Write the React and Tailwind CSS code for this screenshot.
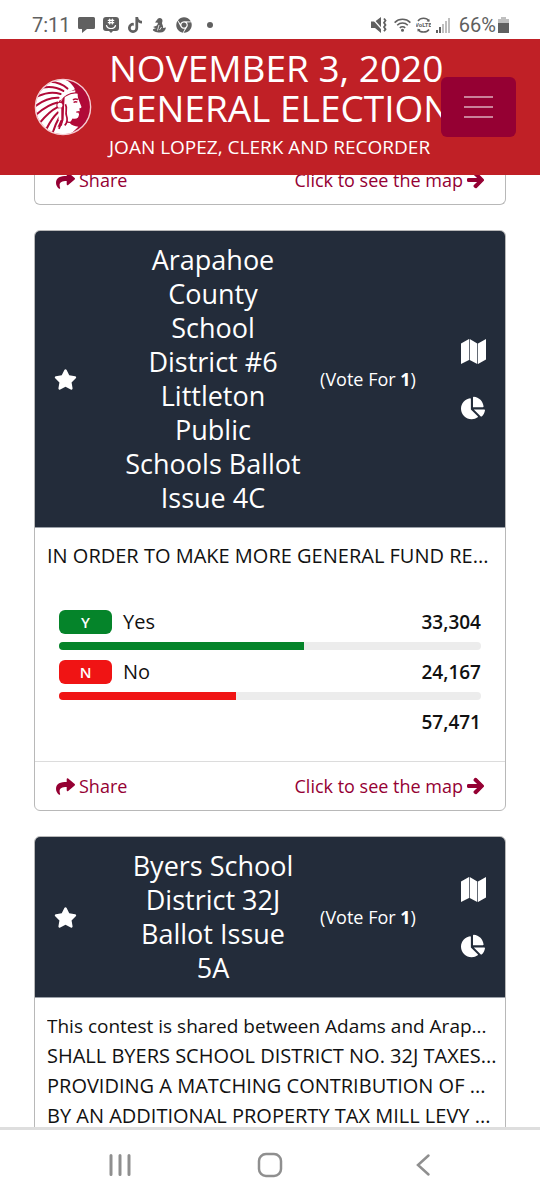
import React from "react";
import { FaShare, FaArrowRight, FaStar, FaChartPie, FaTiktok, FaChrome } from "react-icons/fa";

const contests = [
  {
    title: "Arapahoe County School District #6 Littleton Public Schools Ballot Issue 4C",
    voteFor: 1,
    text: ["IN ORDER TO MAKE MORE GENERAL FUND RE..."],
    results: [
      { code: "Y", label: "Yes", votes: 33304, fill: "bg-[#05842a]" },
      { code: "N", label: "No", votes: 24167, fill: "bg-[#f01414]" },
    ],
  },
  {
    title: "Byers School District 32J Ballot Issue 5A",
    voteFor: 1,
    note: "This contest is shared between Adams and Arap...",
    text: [
      "SHALL BYERS SCHOOL DISTRICT NO. 32J TAXES...",
      "PROVIDING A MATCHING CONTRIBUTION OF ...",
      "BY AN ADDITIONAL PROPERTY TAX MILL LEVY ...",
    ],
    results: [],
  },
];

function StatusBar() {
  return (
    <div className="flex h-[39px] shrink-0 items-center justify-between bg-white pt-[10px] pr-[31px] pl-8 font-['Roboto',sans-serif] text-xl text-[#606060]">
      <div className="flex items-center">
        <span className="w-[46px]">7:11</span>
        <svg className="mr-2 h-4 w-[17px]" viewBox="0 0 17 16" fill="currentColor">
          <path d="M1.500 0h14A1.500 1.500 0 0 1 17 1.500v9a1.500 1.500 0 0 1-1.500 1.500H9l-5 4v-4H1.500A1.500 1.500 0 0 1 0 10.500v-9A1.500 1.500 0 0 1 1.500 0z" />
        </svg>
        <svg className="mr-[9px] h-4 w-4" viewBox="0 0 16 16">
          <path d="M3 0h10a3 3 0 0 1 3 3v8a3 3 0 0 1-3 3h-3l-2 2-2-2H3a3 3 0 0 1-3-3V3a3 3 0 0 1 3-3z" fill="currentColor" />
          <path d="M3.500 8.500c1 4 8 4 9 0M6.700 2v5M9.300 2v5M5.300 3.400h5.400M5.300 5.700h5.400" fill="none" stroke="#fff" strokeWidth="1.200" strokeLinecap="round" />
        </svg>
        <FaTiktok className="mr-[10px] h-4 w-[14px]" />
        <svg className="mr-[10px] h-4 w-[14px]" viewBox="0 0 14 16" fill="currentColor">
          <path d="M6 1.500a2.800 2.800 0 0 1 4.500 2.300c0 1.200-.7 1.800-.4 3 .3 1.300 1.200 1.800 1 4.200l2.900-.5c-.5 3-2.500 5-6 5C4 15.500 0 14 1 12.500c.5-.8 2-.4 2.700-1.200L1 10l3.500-1.200c.8-1 1.600-2 1.400-3L3 5.500z" />
          <path d="M7 8l-1.500 5.500M9.500 10l-2 3" fill="none" stroke="#fff" strokeWidth=".8" />
        </svg>
        <FaChrome className="mr-[15px] h-4 w-4" />
        <span className="h-[6px] w-[6px] rounded-full bg-[#606060]" />
      </div>
      <div className="flex items-center">
        <svg className="mr-[6px] h-4 w-[17px]" viewBox="0 0 17 16" fill="currentColor">
          <path d="M0 4.500h4L10 0v16l-6-5H0z" />
          <path d="M1 1l12 13.500" stroke="#fff" strokeWidth="1.200" />
          <path d="M13 1.500l1.500 2-1.500 2.200 1.500 2.200-1.500 2.200 1.500 2.200-1.500 2" fill="none" stroke="currentColor" strokeWidth="1.800" />
        </svg>
        <svg className="mr-[5px] h-4 w-[17px]" viewBox="0 0 17 16" fill="none" stroke="currentColor" strokeWidth="1.500">
          <path d="M.6 5.600a11.200 11.200 0 0 1 15.800 0M3.200 8.300a7.500 7.500 0 0 1 10.600 0M5.800 10.900a3.800 3.800 0 0 1 5.400 0" />
          <circle cx="8.500" cy="13.200" r=".8" fill="currentColor" />
        </svg>
        <svg className="mr-[5px] h-4 w-[15px]" viewBox="0 0 15 16">
          <path d="M2 4C4.500.4 10.500.4 13 4M2 12.500c2.500 3.400 8.500 3.400 11 0" fill="none" stroke="currentColor" strokeWidth="1.500" />
          <path d="M10.500 4.300l3 .4-.2-3zM4.500 12.200l-3-.4.2 3z" fill="currentColor" />
          <text x="7.500" y="10.400" textAnchor="middle" fontSize="6" fontWeight="700" fill="currentColor">VoLTE</text>
        </svg>
        <svg className="mr-[9px] h-4 w-[14px]" viewBox="0 0 14 16" fill="currentColor">
          <path d="M0 13h2v3H0zM3 10h2v6H3z" />
          <path d="M6 7h2v9H6zM9 4h2v12H9zM12 1h2v15h-2z" opacity=".4" />
        </svg>
        <span className="mr-[2px]">66%</span>
        <svg className="h-4 w-[11px]" viewBox="0 0 11 16" fill="currentColor">
          <path d="M3 0h5v2h3v4H0V2h3z" opacity=".4" />
          <path d="M0 6h11v10H0z" />
        </svg>
      </div>
    </div>
  );
}

function Logo() {
  return (
    <svg className="h-[58px] w-[58px] shrink-0" viewBox="20 19 170 170" role="img" aria-label="Arapahoe County">
      <defs>
        <clipPath id="seal">
          <circle cx="105" cy="104" r="80" />
        </clipPath>
      </defs>
      <circle cx="105" cy="104" r="80" fill="#b10a38" />
      <g clipPath="url(#seal)">
        <path d="M140 52C130 30 110 20 85 18 40 20 10 60 15 110c5 50 40 75 62 80l22-50-4-45 18-30z" fill="#fff" />
        <g fill="none" stroke="#b10a38" strokeWidth="6" strokeLinecap="round">
          <path d="M118 50C105 38 88 31 68 30" />
          <path d="M106 57C88 46 68 43 46 47" />
          <path d="M98 66C78 59 54 62 32 72" />
          <path d="M92 77C70 76 48 84 26 100" />
          <path d="M89 91C68 95 48 108 27 126" />
          <path d="M88 105C72 113 54 130 38 149" />
          <path d="M90 120C79 130 66 149 56 169" />
          <path d="M94 134C86 148 80 162 74 182" />
        </g>
        <path d="M110 73c8-7 23-10 38-8 0 9 1 14 4 21l7 17c1 4-4 4-6 5l1 8-4 4 2 6c-1 10-6 14-19 12l-8 13c4 6 15 10 25 11l-25 24H74l12-22 16-6 4-22z" fill="#fff" />
        <path d="M94 91c5-13 18-24 48-31" fill="none" stroke="#b10a38" strokeWidth="4" />
        <path d="M96 83c9-13 25-23 45-25" fill="none" stroke="#fff" strokeWidth="6" />
        <path d="M104 94v48l-11 26" fill="none" stroke="#b10a38" strokeWidth="5" />
        <path d="M112 96c7 12-1 22 3 33s2 22-5 29" fill="none" stroke="#b10a38" strokeWidth="5" />
        <circle cx="96" cy="99" r="9" fill="#fff" stroke="#b10a38" strokeWidth="3" />
        <path d="M92 108h8v34h-8z" fill="#fff" />
        <path d="M134 83c5-3 10-3 15-1M136 91c4-3 8-3 11-1M144 119l9-1M114 145c5 5 10 5 15 3" fill="none" stroke="#b10a38" strokeWidth="4" />
      </g>
      <circle cx="105" cy="104" r="81" fill="none" stroke="#f6cdd3" strokeWidth="4" />
    </svg>
  );
}

function MapIcon() {
  return (
    <svg className="h-[25px] w-[25px]" viewBox="0 0 25 25" fill="currentColor" aria-hidden="true">
      <path d="M0 4.500L8 0v21L0 25zM8.700 0l7.600 4.500V25l-7.600-4zM17 4.500L25 0v20.500L17 25z" />
    </svg>
  );
}

function CardFooter() {
  return (
    <div className="flex h-12 items-center justify-between px-[21px] text-lg text-[#950033]">
      <a href="#share" className="flex items-center gap-1">
        <FaShare className="h-[19px] w-[19px]" />
        Share
      </a>
      <a href="#map" className="flex items-center gap-1">
        Click to see the map
        <FaArrowRight className="h-[18px] w-[17px] stroke-[36]" />
      </a>
    </div>
  );
}

function Results({ results }) {
  const total = results.reduce((sum, r) => sum + r.votes, 0);
  return (
    <div className="mr-5 ml-3 mt-9">
      <ul>
        {results.map((r) => (
          <li key={r.code} className="mb-[7px]">
            <div className="flex h-[30px] items-center">
              <span className={`flex h-6 w-[53px] items-center justify-center rounded-md text-[15px] font-semibold text-white ${r.fill}`}>
                {r.code}
              </span>
              <span className="ml-[11px] grow">{r.label}</span>
              <span className="text-[19px] font-semibold">{r.votes.toLocaleString("en-US")}</span>
            </div>
            <div className="mt-[5px] h-2 overflow-hidden rounded-full bg-[#ececec]">
              <div
                className={`h-full ${r.fill}`}
                style={{ width: `${(r.votes / total) * 100}%` }}
              />
            </div>
          </li>
        ))}
      </ul>
      <p className="text-right text-[19px] font-semibold">{total.toLocaleString("en-US")}</p>
    </div>
  );
}

function ContestCard({ contest }) {
  return (
    <article className="shrink-0 overflow-hidden rounded-md border border-[#b8b8b8] bg-white">
      <header className="grid grid-cols-[84px_minmax(0,1fr)_122px_76px] items-center border-b border-[#9aa0a8] bg-[#232c3a] py-3 text-white">
        <button type="button" aria-label="Favorite" className="flex w-[60px] justify-center">
          <FaStar className="h-[23px] w-[23px]" />
        </button>
        <h2 className="px-[5px] text-center text-[27px] leading-[34px]">{contest.title}</h2>
        <p className="text-center text-lg">
          (Vote For <b>{contest.voteFor}</b>)
        </p>
        <div className="flex flex-col items-start gap-8 pl-8">
          <button type="button" aria-label="Map">
            <MapIcon />
          </button>
          <button type="button" aria-label="Chart">
            <FaChartPie className="h-6 w-6" />
          </button>
        </div>
      </header>
      <div className="pt-[13px] pr-1 pb-6 pl-3 text-xl leading-[30px] text-[#111]">
        {contest.note && <p className="truncate text-[19px]">{contest.note}</p>}
        {contest.text.map((line) => (
          <p key={line} className="truncate">
            {line}
          </p>
        ))}
        {contest.results.length > 0 && <Results results={contest.results} />}
      </div>
      <div className="border-t border-[#dcdcdc]">
        <CardFooter />
      </div>
    </article>
  );
}

function NavBar() {
  return (
    <nav className="grid h-[73px] shrink-0 grid-cols-[1fr_62px_1fr] items-center border-t-3 border-[#dedede] bg-white text-[#8f8f8f]">
      <button type="button" aria-label="Recent apps" className="flex justify-end pr-[108px]">
        <svg className="h-6 w-[22px]" viewBox="0 0 22 24" stroke="currentColor" strokeWidth="3" strokeLinecap="round">
          <path d="M2 2.500v19M11 2.500v19M20 2.500v19" />
        </svg>
      </button>
      <button type="button" aria-label="Home" className="flex justify-center">
        <svg className="h-[26px] w-[26px]" viewBox="0 0 26 26" fill="none" stroke="currentColor" strokeWidth="2.500">
          <rect x="2" y="2" width="22" height="22" rx="7" />
        </svg>
      </button>
      <button type="button" aria-label="Back" className="flex justify-start pl-[114px]">
        <svg className="h-6 w-4" viewBox="0 0 16 24" fill="none" stroke="currentColor" strokeWidth="2.500" strokeLinecap="round">
          <path d="M13.500 2.500L3 12l10.500 9.500" />
        </svg>
      </button>
    </nav>
  );
}

export default function App() {
  return (
    <div className="flex h-screen flex-col overflow-hidden bg-white font-['Open_Sans',sans-serif]">
      <StatusBar />
      <header className="relative flex shrink-0 items-center bg-[#c02026] py-[9px] pl-[34px] text-white">
        <Logo />
        <div className="ml-[17px]">
          <h1 className="text-[37px] leading-10 whitespace-nowrap">
            NOVEMBER 3, 2020
            <br />
            GENERAL ELECTION
          </h1>
          <p className="my-1 text-[19px] leading-[30px] whitespace-nowrap">JOAN LOPEZ, CLERK AND RECORDER</p>
        </div>
        <button
          type="button"
          aria-label="Menu"
          className="absolute top-[38px] right-6 flex h-[60px] w-[75px] flex-col items-center justify-center gap-2 rounded-md bg-[#950033]"
        >
          <span className="h-[2px] w-[29px] bg-[#ca8099]" />
          <span className="h-[2px] w-[29px] bg-[#ca8099]" />
          <span className="h-[2px] w-[29px] bg-[#ca8099]" />
        </button>
      </header>
      <main className="flex min-h-0 grow flex-col gap-[25px] overflow-y-auto px-[34px] [scrollbar-width:none]">
        <div className="-mt-[19px] shrink-0 rounded-b-md border border-t-0 border-[#b8b8b8] bg-white">
          <CardFooter />
        </div>
        {contests.map((c) => (
          <ContestCard key={c.title} contest={c} />
        ))}
      </main>
      <NavBar />
    </div>
  );
}
